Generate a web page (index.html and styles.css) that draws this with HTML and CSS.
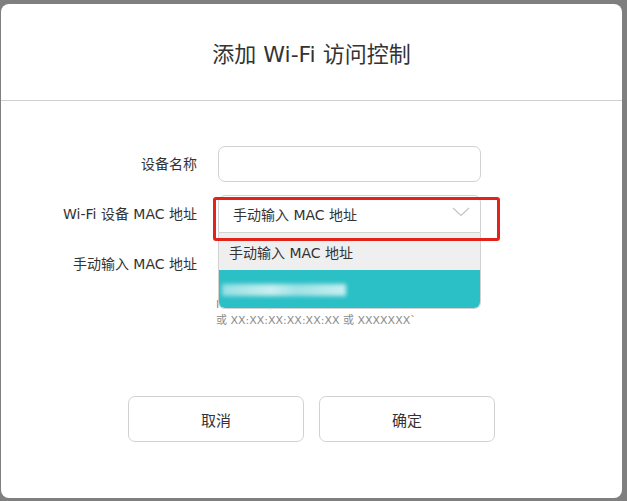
FILE: index.html
```html
<!DOCTYPE html>
<html lang="zh-CN">
<head>
  <meta charset="UTF-8">
  <meta name="viewport" content="width=device-width, initial-scale=1.0">
  <title>添加 Wi-Fi 访问控制</title>
  <link rel="stylesheet" href="styles.css">
</head>
<body>
  <div class="dialog">
    <div class="dialog-header">
      <h2>添加 Wi-Fi 访问控制</h2>
    </div>

    <div class="form">
      <div class="row">
        <label class="label">设备名称</label>
        <input class="field" type="text">
      </div>

      <div class="row">
        <label class="label">Wi-Fi 设备 MAC 地址</label>
        <div class="select-wrap">
          <div class="select">
            <span>手动输入 MAC 地址</span>
            <svg class="chevron" width="18" height="10" viewBox="0 0 18 10">
              <path d="M1 1 L9 8.5 L17 1" fill="none" stroke="#c4c4c4" stroke-width="1.2"/>
            </svg>
          </div>
          <div class="highlight"></div>
          <!-- open dropdown -->
          <ul class="options">
            <li class="option">手动输入 MAC 地址</li>
            <li class="option active"><span class="blurred"></span></li>
          </ul>
        </div>
      </div>

      <div class="row">
        <label class="label">手动输入 MAC 地址</label>
        <div class="field-group">
          <input class="field" type="text">
          <p class="hint">MAC 地址格式为 XX-XX-XX-XX-XX-XX<br>或 XX:XX:XX:XX:XX:XX 或 XXXXXXX`</p>
        </div>
      </div>
    </div>

    <div class="actions">
      <button class="btn">取消</button>
      <button class="btn">确定</button>
    </div>
  </div>
</body>
</html>
```

FILE: styles.css
```css
:root {
  --backdrop: #7f7f7f;
  --text-color: #333333;
  --secondary-text-color: #8a8a8a;
  --border-color: #d2d2d2;
  --line-color: #cfcfcf;
  --teal: #2bbfc6;
  --option-bg: #efefef;
  --mark-red: #e2231a;
}

html, body {
  margin: 0;
  height: 100%;
}

body {
  background-color: var(--backdrop);
  font-family: "DejaVu Sans", "Noto Sans CJK SC", sans-serif;
  color: var(--text-color);
  padding: 4px 5px 3px 1px;
  box-sizing: border-box;
}

.dialog {
  height: 100%;
  background-color: #ffffff;
  border-radius: 8px;
  display: flex;
  flex-direction: column;
}

.dialog-header {
  height: 96px;
  border-bottom: 1px solid var(--line-color);
  display: flex;
  align-items: center;
  justify-content: center;
}

h2 {
  margin: 0;
  font-size: 22px;
  font-weight: normal;
  color: #333;
}

.form {
  padding-top: 45px;
  display: flex;
  flex-direction: column;
  gap: 13px;
}

.row {
  display: grid;
  grid-template-columns: 196px 263px;
  column-gap: 21px;
  align-items: start;
}

.label {
  text-align: right;
  font-size: 14px;
  line-height: 36px;
  height: 36px;
  white-space: nowrap;
}

.row:nth-child(2) .label {
  line-height: 38px;
}

.field {
  width: 100%;
  height: 36px;
  box-sizing: border-box;
  border: 1px solid var(--border-color);
  border-radius: 7px;
  margin: 0;
  background: #fff;
}

.select-wrap {
  position: relative;
}

.select {
  height: 38px;
  box-sizing: border-box;
  border: 1px solid var(--border-color);
  border-radius: 7px 7px 0 0;
  display: flex;
  align-items: center;
  justify-content: space-between;
  padding: 0 10px 0 14px;
  font-size: 14px;
}

.chevron {
  margin-top: -4px;
}

.highlight {
  position: absolute;
  left: -5px;
  top: 2px;
  width: 287px;
  height: 44px;
  box-sizing: border-box;
  border: 3px solid var(--mark-red);
  border-radius: 3px;
  z-index: 3;
}

.options {
  position: absolute;
  top: 38px;
  left: 0;
  right: 0;
  margin: 0;
  padding: 0;
  list-style: none;
  border: 1px solid var(--border-color);
  border-top: none;
  border-radius: 0 0 7px 7px;
  overflow: hidden;
  z-index: 2;
  background: #fff;
}

.option {
  height: 37px;
  display: flex;
  align-items: center;
  padding-left: 10px;
  font-size: 14px;
  background-color: var(--option-bg);
}

.option.active {
  height: 38px;
  background-color: var(--teal);
  padding-left: 3px;
}

.blurred {
  display: block;
  width: 124px;
  height: 12px;
  background: linear-gradient(90deg, rgba(255,255,255,0.5), rgba(255,255,255,0.75) 40%, rgba(255,255,255,0.55) 60%, rgba(255,255,255,0.75));
  filter: blur(2px);
  margin-top: 2px;
}

.field-group {
  display: flex;
  flex-direction: column;
}

.hint {
  margin: 0;
  margin-left: -2px;
  padding-top: 15px;
  font-size: 11px;
  line-height: 16px;
  color: var(--secondary-text-color);
  white-space: nowrap;
}

.actions {
  margin-top: 67px;
  display: flex;
  justify-content: center;
  gap: 15px;
}

.btn {
  width: 176px;
  height: 46px;
  border: 1px solid var(--border-color);
  border-radius: 7px;
  background: #fff;
  font-family: inherit;
  font-size: 15px;
  color: #333;
  cursor: pointer;
}
```
